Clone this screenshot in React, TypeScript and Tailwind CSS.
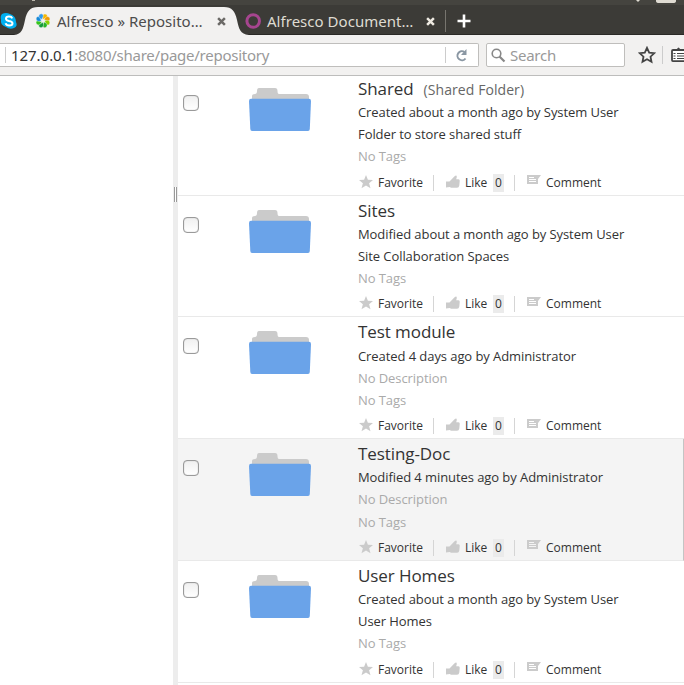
type Item = { title: string; note?: string; info: string; desc: string; noDesc?: boolean; active?: boolean };

const items: Item[] = [
  { title: "Shared", note: "(Shared Folder)", info: "Created about a month ago by System User", desc: "Folder to store shared stuff" },
  { title: "Sites", info: "Modified about a month ago by System User", desc: "Site Collaboration Spaces" },
  { title: "Test module", info: "Created 4 days ago by Administrator", desc: "No Description", noDesc: true },
  { title: "Testing-Doc", info: "Modified 4 minutes ago by Administrator", desc: "No Description", noDesc: true, active: true },
  { title: "User Homes", info: "Created about a month ago by System User", desc: "User Homes" },
];

function Folder() {
  return (
    <svg className="block h-[44px] w-[64px]" viewBox="0 0 64 44">
      <path d="M4 14V8Q4 6 7 6Q9 6 9 3Q9 0 11 0H27Q29.500 0 29.500 3Q29.500 6 31 6H58Q61 6 61 9V14Z" fill="#cbcbcb" />
      <path d="M3 10.700H61Q63 10.700 63 13L61.800 41Q61.700 43 60 43H4Q2.400 43 2.300 41L1 13Q1 10.700 3 10.700Z" fill="#6aa3e9" />
    </svg>
  );
}

function Star() {
  return (
    <svg className="block h-[14px] w-[14px]" viewBox="0 0 14 14">
      <path d="M7 0L8.900 4.800L14 5L10.100 8.200L11.500 13.300L7 10.500L2.500 13.300L3.900 8.200L0 5L5.100 4.800Z" fill="#cbcbcb" />
    </svg>
  );
}

function Thumb() {
  return (
    <svg className="block h-[14px] w-[15px]" viewBox="0 0 15 14">
      <path d="M0 6.500H3.500L8.600 1.200Q10.800 -.3 10.800 2L10.200 4.300H12.500Q14 4.600 13.700 6.300L13.300 10.500Q13 12.800 11 12.800H5L3.800 12L0 12.500Z" fill="#cbcbcb" />
    </svg>
  );
}

function Bubble({ line }: { line: string }) {
  return (
    <svg className="block h-[12px] w-[15px]" viewBox="0 0 15 12">
      <path d="M0 0H14L11 4V9H0Z" fill="#cbcbcb" />
      <path d="M2 2.500H7M2 4.500H9M2 6.500H9" stroke={line} strokeWidth="1" />
    </svg>
  );
}

function Row({ item }: { item: Item }) {
  return (
    <div className={`flex h-[121.750px] shrink-0 border-b border-[#e9e9e9] ${item.active ? "border-r border-r-[#c4c4c4] bg-[#f4f4f4]" : ""}`}>
      <div className="w-[70px] shrink-0 pt-[21px] pl-[5px]">
        <div className="h-4 w-4 rounded-[4px] border border-[#9a9a9a] bg-gradient-to-b from-[#f0f0f0] to-white shadow-[inset_0_0_1px_#999]" />
      </div>
      <div className="w-[110px] shrink-0 pt-[14px]"><Folder /></div>
      <div className="min-w-0 whitespace-nowrap text-[13px] leading-[22.100px] tracking-[-0.075px] text-[#333]">
        <div className="flex h-[27.300px] items-baseline pt-[3px] text-[17px] leading-[24px] tracking-[-0.080px]">
          <span>{item.title}</span>
          {item.note && <span className="ml-[10px] text-[14px] tracking-[0.070px] text-[#666]">{item.note}</span>}
        </div>
        <div className="h-[22px]">{item.info}</div>
        <div className={item.noDesc ? "h-[22.200px] text-[#aaa]" : "h-[22.200px]"}>{item.desc}</div>
        <div className="h-[22.100px] text-[#aaa]">No Tags</div>
        <div className="mt-[5.200px] flex h-[20px] items-center text-[12px] leading-[20px] tracking-normal">
          <span className="w-[20px] pb-[2px] pl-px"><Star /></span>
          <span className="w-[55px]">Favorite</span>
          <span className="h-4 w-[13px] border-l border-[#d5d5d5]" />
          <span className="w-[19px] pb-[2px]"><Thumb /></span>
          <span className="w-[28px]">Like</span>
          <span className="h-[18px] w-[11px] bg-[#ebebeb] text-center leading-[18px]">0</span>
          <span className="ml-[10px] h-4 w-[13px] border-l border-[#d5d5d5]" />
          <span className="w-[19px] pb-[3px]"><Bubble line={item.active ? "#f4f4f4" : "#fff"} /></span>
          <span>Comment</span>
        </div>
      </div>
    </div>
  );
}

function Cross({ className }: { className: string }) {
  return (
    <svg className={className} viewBox="0 0 8 8">
      <path d="M1 1L7 7M7 1L1 7" stroke="currentColor" strokeWidth="2.200" />
    </svg>
  );
}

const petals = ["#f6b800", "#f09a00", "#8ed000", "#28b428", "#149a3c", "#35c51b", "#1488d8", "#2f9af0"];

function Tabs() {
  return (
    <div className="relative h-[35px] w-full bg-[#3c3b37] text-[15px]">
      <svg className="absolute inset-0 h-[35px] w-full" viewBox="0 0 684 35">
        <rect width="684" height="5" fill="#45443f" />
        <rect y="34" width="684" height="1" fill="#2a2926" />
        <path d="M656 0H676V1Q676 3 673 3H659Q656 3 656 1Z" fill="#dfdbd2" />
        <path d="M636 0H640L638 2Z" fill="#dfdbd2" />
        <path d="M32 0H35V1H32Z" fill="#bbb7ad" />
        <path d="M14 35C22 34 23 29 25 20C27 11 30 7 38 7H224C232 7 235 11 237 20C239 29 240 34 249 35Z" fill="#f2f1f0" />
        <path d="M2 14Q6 12 10 14Q16 16 16 22Q18 26 14 28Q10 30 6 27Q0 25 1 20Q0 16 2 14Z" fill="#00aff0" />
        <path d="M12.300 18.300Q11.500 16.500 9 16.500Q6 16.500 6 18.700Q6 20.300 9 20.900Q12.500 21.500 12.500 23.300Q12.500 25.500 9.300 25.500Q6.300 25.500 5.600 23.200" fill="none" stroke="#fff" strokeWidth="2" />
        {petals.map((c, i) => (
          <path key={c} d="M43 19.300C41.500 18 40.500 14.500 43.500 13.700C46.200 13.400 47 16 45.500 17.300C44.500 18.200 43.500 18.200 43 19.300Z" fill={c} stroke="#f2f1f0" strokeWidth="0.400" transform={`rotate(${i * 45 + 12} 43 20.800)`} />
        ))}
        <circle cx="253.200" cy="21" r="6.300" fill="none" stroke="#a6458f" strokeWidth="3" />
        <path d="M445.500 10V32" stroke="#77756f" />
        <path d="M457.500 21H470.500M464 14.500V27.500" stroke="#fff" strokeWidth="2.600" />
      </svg>
      <div className="relative flex h-[35px] items-center pt-[7px] pl-[57px] whitespace-nowrap">
        <span className="w-[160px] tracking-[0.010px] text-[#4c4c4c]">Alfresco » Reposito…</span>
        <Cross className="h-[9px] w-[9px] text-[#6b6966]" />
        <span className="ml-[41px] w-[159px] tracking-[0.030px] text-[#dfdbd2]">Alfresco Document…</span>
        <Cross className="h-[9px] w-[9px] text-[#eeeae2]" />
      </div>
    </div>
  );
}

function Toolbar() {
  return (
    <div className="flex h-[41px] items-center border-b border-[#bdbdbc] bg-[#f2f1f0] text-[15px] whitespace-nowrap">
      <div className="flex h-[24px] w-[479px] items-center rounded-r-[2px] border border-l-0 border-[#bfbebc] bg-white">
        <span className="mr-[5px] ml-[5px] h-4 w-px bg-[#ccc]" />
        <span className="w-[434px] tracking-[-0.250px] text-[#999]"><span className="tracking-[-0.040px] text-[#333]">127.0.0.1</span>:8080/share/page/repository</span>
        <span className="h-4 w-px bg-[#ccc]" />
        <svg className="ml-[9px] h-[13px] w-[13px]" viewBox="0 0 13 13">
          <path d="M10.500 9.500A4.500 4.500 0 1 1 9.500 3" fill="none" stroke="#8a97a3" strokeWidth="2" />
          <path d="M11.500 0V6H6Z" fill="#8a97a3" />
        </svg>
      </div>
      <div className="ml-[7px] flex h-[24px] w-[139px] items-center rounded-[2px] border border-[#bfbebc] bg-white">
        <svg className="ml-[4px] h-[15px] w-[15px]" viewBox="0 0 15 15">
          <circle cx="5.500" cy="5.500" r="4.300" fill="none" stroke="#888" strokeWidth="1.600" />
          <path d="M8.500 8.500L13.500 13.500" stroke="#888" strokeWidth="2.200" />
        </svg>
        <span className="ml-[4px] tracking-[-0.250px] text-[#999]">Search</span>
      </div>
      <svg className="ml-[13px] h-[18px] w-[18px]" viewBox="0 0 18 18">
        <path d="M9 1.800L11.200 6.600L16.300 7.200L12.500 10.700L13.500 15.800L9 13.300L4.500 15.800L5.500 10.700L1.700 7.200L6.800 6.600Z" fill="none" stroke="#444" strokeWidth="1.800" />
      </svg>
      <span className="ml-[6px] h-[18px] w-px bg-[#ccc]" />
      <svg className="ml-[8px] h-[18px] w-[13px] shrink-0" viewBox="0 0 13 18">
        <path d="M2 4H14V15.200H2Q1 15 1 14V5Q1 4 2 4Z" fill="#fff" stroke="#444" strokeWidth="1.800" />
        <path d="M3.500 4L6 3Q7.500 0 9 3L13 4V5H3.500Z" fill="#444" />
        <path d="M2.500 7.500H4.500M6 7.500H14M2.500 10H4.500M6 10H14M2.500 12.500H4.500M6 12.500H14" stroke="#444" strokeWidth="1.200" />
      </svg>
    </div>
  );
}

export default function App() {
  return (
    <div className="flex h-[685px] w-[684px] flex-col overflow-hidden bg-white font-['Open_Sans','Noto_Sans',sans-serif]">
      <div className="shrink-0 font-['Noto_Sans',sans-serif]">
        <Tabs />
        <Toolbar />
      </div>
      <main className="flex min-h-0 flex-1 overflow-hidden">
        <aside className="w-[173px] shrink-0" />
        <div className="w-[5px] shrink-0 bg-[#ededed] pt-[111px]">
          <div className="ml-px h-[15px] w-[3px] border-x border-[#999] bg-white" />
        </div>
        <div className="min-w-0 flex-1 overflow-hidden">
          <div className="-mt-[2.100px] flex flex-col">
            {items.map((item) => <Row key={item.title} item={item} />)}
          </div>
        </div>
      </main>
    </div>
  );
}
